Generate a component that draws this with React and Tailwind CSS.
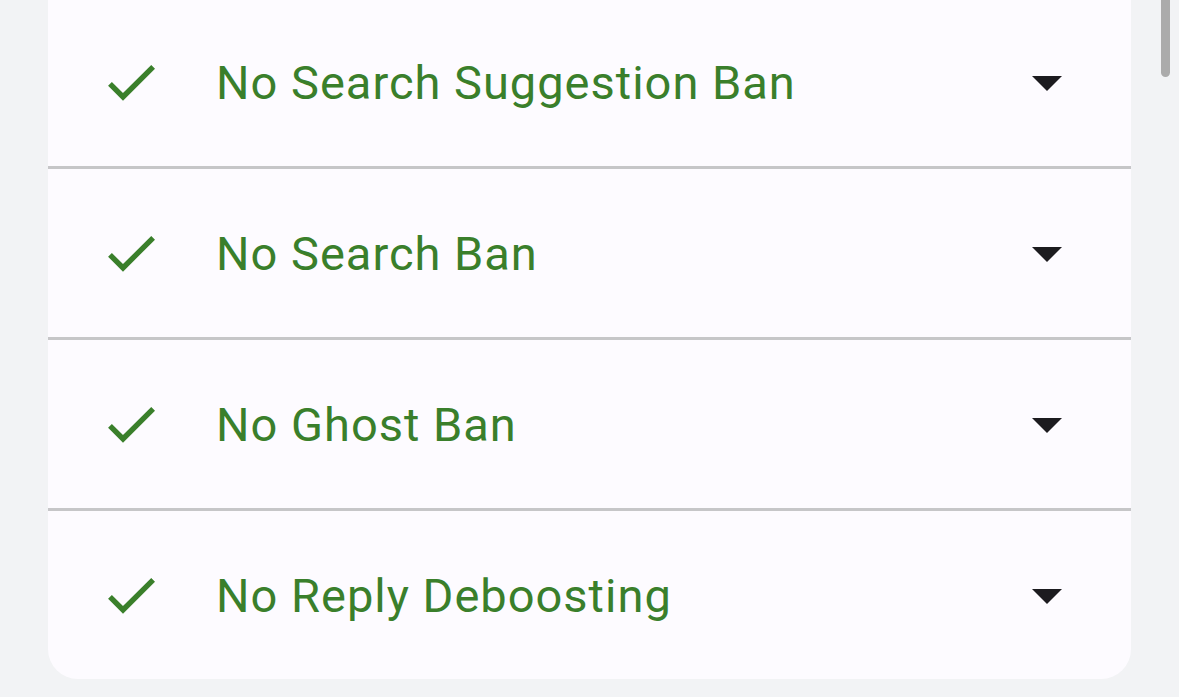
const GREEN = "text-[#3a7f2b]";

const items = [
  "No Search Suggestion Ban",
  "No Search Ban",
  "No Ghost Ban",
  "No Reply Deboosting",
];

function Check() {
  return (
    <svg width="64" height="64" viewBox="0 0 24 24" className={`shrink-0 ${GREEN}`} fill="currentColor">
      <path d="M9 16.17L4.83 12l-1.42 1.41L9 19 21 7l-1.41-1.41z" />
    </svg>
  );
}

function Caret() {
  return (
    <svg width="72" height="72" viewBox="0 0 24 24" className="shrink-0 text-[#1c1b1f]" fill="currentColor">
      <path d="M7 10l5 5 5-5z" />
    </svg>
  );
}

export default function App() {
  return (
    <div
      className="relative h-[697px] w-[1179px] overflow-hidden bg-[#f2f3f5]"
      style={{ fontFamily: "Roboto, 'Noto Sans', sans-serif" }}
    >
      <div className="ml-[48px] -mt-[2px] w-[1083px] overflow-hidden rounded-b-[30px] bg-[#fdfbff]">
        {items.map((label, i) => (
          <div key={label}>
            <div className="flex h-[168px] items-center">
              <div className="ml-[51px] flex w-[117px] items-center">
                <Check />
              </div>
              <span className={`flex-1 text-[47px] leading-none tracking-[1px] ${GREEN}`}>{label}</span>
              <div className="mr-[48px]">
                <Caret />
              </div>
            </div>
            {i < items.length - 1 && <div className="h-[3px] bg-[#c6c6c8]" />}
          </div>
        ))}
      </div>
      <div className="absolute left-[1161px] top-0 h-[77px] w-[9px] rounded-b-full bg-[#ababab]" />
    </div>
  );
}
